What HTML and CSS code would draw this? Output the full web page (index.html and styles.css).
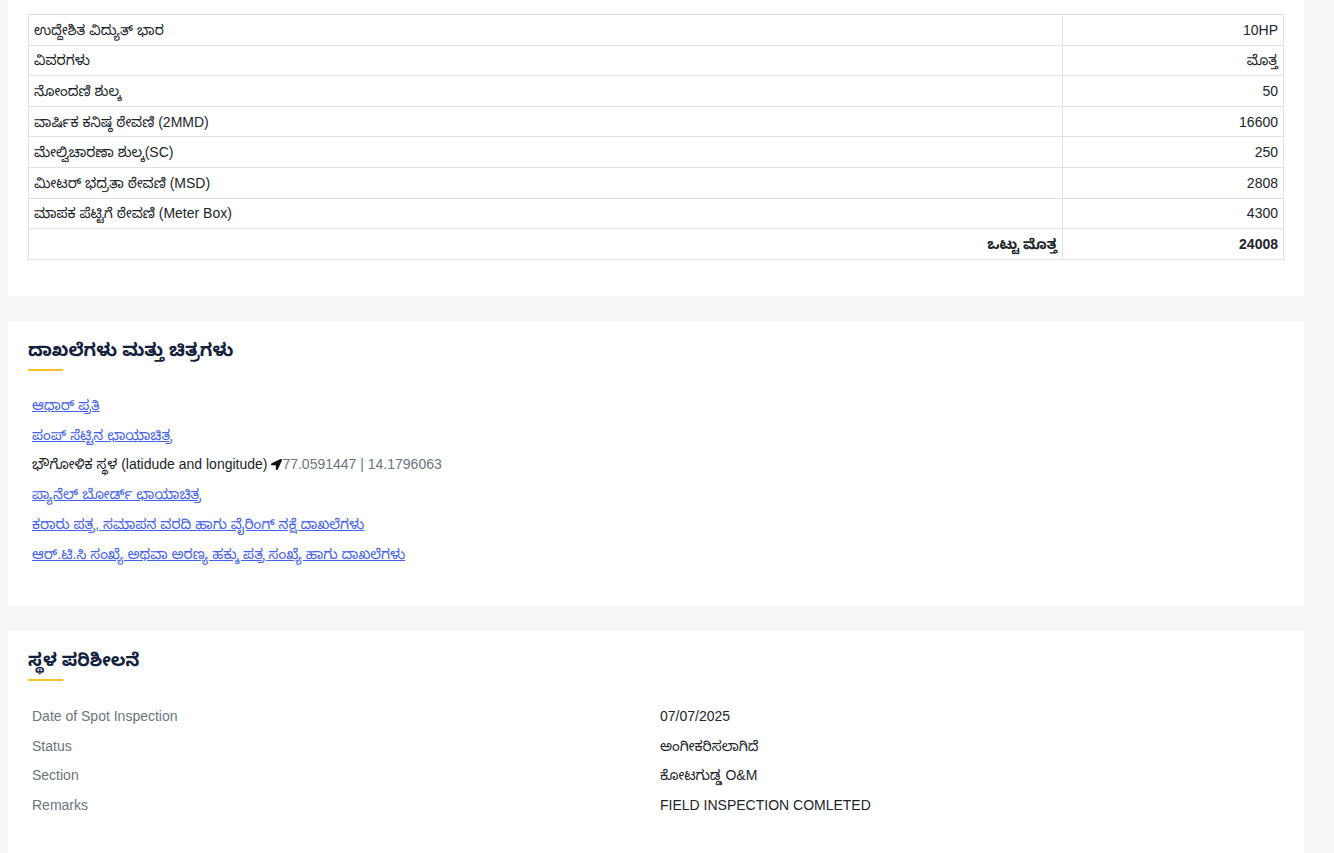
FILE: index.html
```html
<!DOCTYPE html>
<html lang="kn">
<head>
<meta charset="utf-8">
<title>Application details</title>
<link rel="stylesheet" href="styles.css">
</head>
<body>
<div class="page">
  <section class="card card-first">
    <table class="fee-table">
      <colgroup><col class="col-label"><col class="col-value"></colgroup>
      <tbody>
        <tr><td>ಉದ್ದೇಶಿತ ವಿದ್ಯುತ್ ಭಾರ</td><td class="num">10HP</td></tr>
        <tr><td>ವಿವರಗಳು</td><td class="num">ಮೊತ್ತ</td></tr>
        <tr><td>ನೋಂದಣಿ ಶುಲ್ಕ</td><td class="num">50</td></tr>
        <tr><td>ವಾರ್ಷಿಕ ಕನಿಷ್ಠ ಠೇವಣಿ (2MMD)</td><td class="num">16600</td></tr>
        <tr><td>ಮೇಲ್ವಿಚಾರಣಾ ಶುಲ್ಕ(SC)</td><td class="num">250</td></tr>
        <tr><td>ಮೀಟರ್ ಭದ್ರತಾ ಠೇವಣಿ (MSD)</td><td class="num">2808</td></tr>
        <tr><td>ಮಾಪಕ ಪೆಟ್ಟಿಗೆ ಠೇವಣಿ (Meter Box)</td><td class="num">4300</td></tr>
        <tr class="total"><td class="num">ಒಟ್ಟು ಮೊತ್ತ</td><td class="num">24008</td></tr>
      </tbody>
    </table>
  </section>

  <section class="card">
    <h2 class="card-title">ದಾಖಲೆಗಳು ಮತ್ತು ಚಿತ್ರಗಳು</h2>
    <ul class="doc-list">
      <li><a href="#">ಆಧಾರ್ ಪ್ರತಿ</a></li>
      <li><a href="#">ಪಂಪ್ ಸೆಟ್ಟಿನ ಛಾಯಾಚಿತ್ರ</a></li>
      <li class="geo">ಭೌಗೋಳಿಕ ಸ್ಥಳ (latidude and longitude)
        <svg class="loc-icon" viewBox="0 0 512 512" aria-hidden="true"><path d="M444.52 3.52L28.74 195.42c-47.97 22.39-31.98 92.75 19.19 92.75h175.91v175.91c0 51.17 70.36 67.17 92.75 19.19l191.9-415.78c15.99-38.39-25.59-79.970-63.97-63.97z"/></svg><span class="coords">77.0591447 | 14.1796063</span></li>
      <li><a href="#">ಪ್ಯಾನೆಲ್ ಬೋರ್ಡ್ ಛಾಯಾಚಿತ್ರ</a></li>
      <li><a href="#">ಕರಾರು ಪತ್ರ, ಸಮಾಪನ ವರದಿ ಹಾಗು ವೈರಿಂಗ್ ನಕ್ಷೆ ದಾಖಲೆಗಳು</a></li>
      <li><a href="#">ಆರ್.ಟಿ.ಸಿ ಸಂಖ್ಯೆ ಅಥವಾ ಅರಣ್ಯ ಹಕ್ಕು ಪತ್ರ ಸಂಖ್ಯೆ ಹಾಗು ದಾಖಲೆಗಳು</a></li>
    </ul>
  </section>

  <section class="card card-last">
    <h2 class="card-title">ಸ್ಥಳ ಪರಿಶೀಲನೆ</h2>
    <dl class="info-grid">
      <dt>Date of Spot Inspection</dt><dd>07/07/2025</dd>
      <dt>Status</dt><dd>ಅಂಗೀಕರಿಸಲಾಗಿದೆ</dd>
      <dt>Section</dt><dd>ಕೋಟಗುಡ್ಡ O&amp;M</dd>
      <dt>Remarks</dt><dd>FIELD INSPECTION COMLETED</dd>
    </dl>
  </section>
</div>
</body>
</html>
```

FILE: styles.css
```css
* { box-sizing: border-box; }

html, body {
  margin: 0;
  padding: 0;
  background: #f6f6f6;
}

body {
  font-family: "Liberation Sans", Arial, "Noto Sans Kannada", "Noto Sans", sans-serif;
  font-size: 14px;
  line-height: 20px;
  color: #212529;
}

.page {
  width: 1296px;
  margin-left: 8px;
  display: flex;
  flex-direction: column;
  gap: 25px;
}

.card {
  background: #ffffff;
  padding: 17px 20px 37px;
}

.card-first {
  padding-top: 14px;
  padding-bottom: 36px;
}

.card-last {
  padding-bottom: 60px;
}

/* fee table */
.fee-table {
  width: 100%;
  border-collapse: collapse;
  table-layout: fixed;
}

.col-value { width: 221px; }

.fee-table td {
  border: 1px solid #dee2e6;
  padding: 4.8px 5px;
  line-height: 20px;
  color: #212529;
}

.fee-table td.num { text-align: right; }

.fee-table .total td { font-weight: 700; }

/* card title */
.card-title {
  margin: 0;
  font-size: 18px;
  line-height: 24px;
  font-weight: 700;
  color: #14213d;
  padding-bottom: 7px;
}

.card-title::after {
  content: "";
  display: block;
  width: 35px;
  height: 2px;
  margin-top: 7px;
  background: #f5c42c;
}

/* document links */
.doc-list {
  list-style: none;
  margin: 12px 0 0;
  padding: 0;
}

.doc-list li {
  padding: 4.95px 4px;
  line-height: 20px;
}

.doc-list a {
  color: #4361ee;
  text-decoration: underline;
}

.geo { color: #212529; }

.loc-icon {
  width: 11px;
  height: 11px;
  fill: #111;
  vertical-align: -1px;
}

.coords { color: #6c757d; }

/* spot inspection */
.info-grid {
  display: grid;
  grid-template-columns: 1fr 1fr;
  margin: 13px 0 0;
}

.info-grid dt,
.info-grid dd {
  margin: 0;
  padding: 4.9px 4px;
  line-height: 20px;
}

.info-grid dt { color: #6c757d; }
.info-grid dd { color: #212529; }
```
